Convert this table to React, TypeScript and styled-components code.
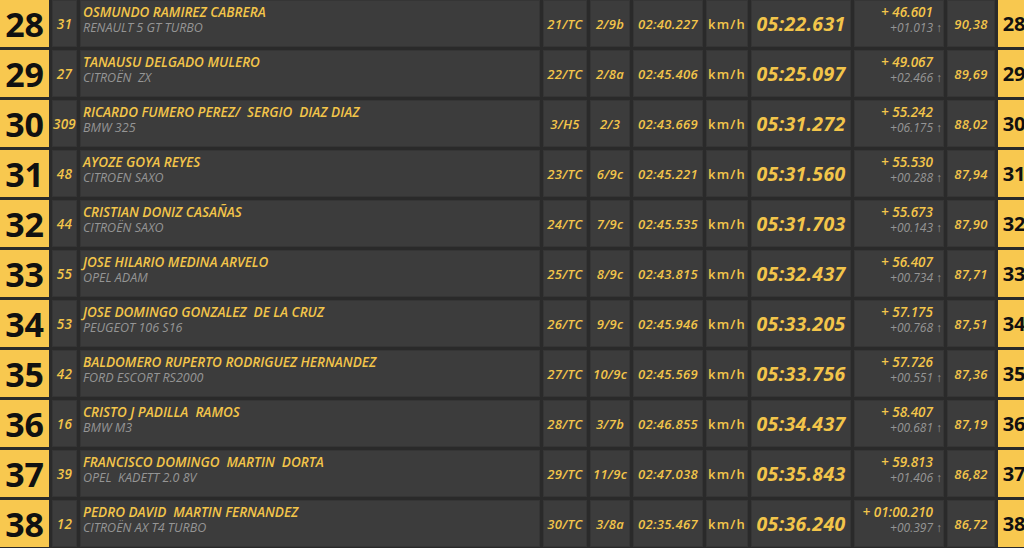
import React from 'react'
import styled, { createGlobalStyle } from 'styled-components'

const GlobalStyle = createGlobalStyle`
    html, body {
        margin: 0;
        padding: 0;
        background: #2a2a2a;
        overflow: hidden;
    }
    body {
        font-family: 'Open Sans', 'Liberation Sans', sans-serif;
    }
`

interface Entry {
    pos: number
    num: string
    driver: string
    car: string
    classPos: string
    catPos: string
    stage: string
    total: string
    gap: string
    prev: string
    speed: string
}

const entries: Entry[] = [
    { pos: 28, num: '31', driver: 'OSMUNDO RAMIREZ CABRERA', car: 'RENAULT 5 GT TURBO', classPos: '21/TC', catPos: '2/9b', stage: '02:40.227', total: '05:22.631', gap: '+ 46.601', prev: '+01.013', speed: '90,38' },
    { pos: 29, num: '27', driver: 'TANAUSU DELGADO MULERO', car: 'CITROËN  ZX', classPos: '22/TC', catPos: '2/8a', stage: '02:45.406', total: '05:25.097', gap: '+ 49.067', prev: '+02.466', speed: '89,69' },
    { pos: 30, num: '309', driver: 'RICARDO FUMERO PEREZ/  SERGIO  DIAZ DIAZ', car: 'BMW 325', classPos: '3/H5', catPos: '2/3', stage: '02:43.669', total: '05:31.272', gap: '+ 55.242', prev: '+06.175', speed: '88,02' },
    { pos: 31, num: '48', driver: 'AYOZE GOYA REYES', car: 'CITROEN SAXO', classPos: '23/TC', catPos: '6/9c', stage: '02:45.221', total: '05:31.560', gap: '+ 55.530', prev: '+00.288', speed: '87,94' },
    { pos: 32, num: '44', driver: 'CRISTIAN DONIZ CASAÑAS', car: 'CITROËN SAXO', classPos: '24/TC', catPos: '7/9c', stage: '02:45.535', total: '05:31.703', gap: '+ 55.673', prev: '+00.143', speed: '87,90' },
    { pos: 33, num: '55', driver: 'JOSE HILARIO MEDINA ARVELO', car: 'OPEL ADAM', classPos: '25/TC', catPos: '8/9c', stage: '02:43.815', total: '05:32.437', gap: '+ 56.407', prev: '+00.734', speed: '87,71' },
    { pos: 34, num: '53', driver: 'JOSE DOMINGO GONZALEZ  DE LA CRUZ', car: 'PEUGEOT 106 S16', classPos: '26/TC', catPos: '9/9c', stage: '02:45.946', total: '05:33.205', gap: '+ 57.175', prev: '+00.768', speed: '87,51' },
    { pos: 35, num: '42', driver: 'BALDOMERO RUPERTO RODRIGUEZ HERNANDEZ', car: 'FORD ESCORT RS2000', classPos: '27/TC', catPos: '10/9c', stage: '02:45.569', total: '05:33.756', gap: '+ 57.726', prev: '+00.551', speed: '87,36' },
    { pos: 36, num: '16', driver: 'CRISTO J PADILLA  RAMOS', car: 'BMW M3', classPos: '28/TC', catPos: '3/7b', stage: '02:46.855', total: '05:34.437', gap: '+ 58.407', prev: '+00.681', speed: '87,19' },
    { pos: 37, num: '39', driver: 'FRANCISCO DOMINGO  MARTIN  DORTA', car: 'OPEL  KADETT 2.0 8V', classPos: '29/TC', catPos: '11/9c', stage: '02:47.038', total: '05:35.843', gap: '+ 59.813', prev: '+01.406', speed: '86,82' },
    { pos: 38, num: '12', driver: 'PEDRO DAVID  MARTIN FERNANDEZ', car: 'CITROËN AX T4 TURBO', classPos: '30/TC', catPos: '3/8a', stage: '02:35.467', total: '05:36.240', gap: '+ 01:00.210', prev: '+00.397', speed: '86,72' },
]

const Board = styled.div`
    display: flex;
    flex-direction: column;
    gap: 3px;
    width: 1030px;
`

const Row = styled.div`
    display: grid;
    grid-template-columns: 49px 25px 460px 44px 40px 70px 42px 100px 90px 48px 32px;
    column-gap: 3px;
    height: 47px;
`

const Cell = styled.div`
    background: #3c3c3c;
    box-shadow: inset 0 0 0 1px #353535;
    color: #f3c54a;
    display: flex;
    align-items: center;
    justify-content: center;
    font-style: italic;
    font-size: 13px;
    font-weight: 600;
    letter-spacing: 0.3px;
    white-space: pre;
    overflow: hidden;
`

const RankCell = styled.div<{ $size: number }>`
    background: #f8c84f;
    color: #111;
    display: flex;
    align-items: center;
    justify-content: center;
    font-weight: 700;
    font-size: ${p => p.$size}px;
    letter-spacing: -0.3px;
`

const NumCell = styled(Cell)`
    font-size: 13.5px;
`

const DriverCell = styled(Cell)`
    flex-direction: column;
    align-items: flex-start;
    justify-content: flex-start;
    padding: 4px 0 0 3px;
    letter-spacing: 0;
`

const Driver = styled.div`
    font-size: 13.5px;
    font-weight: 600;
    line-height: 16px;
    color: #f3c54a;
`

const Car = styled.div`
    font-size: 12.5px;
    font-weight: 500;
    line-height: 16px;
    color: #959595;
`

const Unit = styled(Cell)`
    font-style: normal;
    letter-spacing: 1.2px;
`

const Total = styled(Cell)`
    font-size: 19.5px;
    font-weight: 700;
    letter-spacing: 0.3px;
`

const GapCell = styled(Cell)`
    flex-direction: column;
    align-items: flex-end;
    justify-content: flex-start;
    padding: 4px 2px 0 0;
    letter-spacing: 0;
`

const GapMain = styled.div`
    font-size: 13.5px;
    line-height: 16px;
    padding-right: 9px;
`

const GapPrev = styled.div`
    font-size: 12px;
    font-weight: 500;
    line-height: 16px;
    color: #959595;
`

const Arrow = styled.span`
    font-style: normal;
    margin-left: 3px;
`

export default function App() {
    return (
        <>
            <GlobalStyle />
            <Board>
                {entries.map(e => (
                    <Row key={e.pos}>
                        <RankCell $size={34}>{e.pos}</RankCell>
                        <NumCell>{e.num}</NumCell>
                        <DriverCell>
                            <Driver>{e.driver}</Driver>
                            <Car>{e.car}</Car>
                        </DriverCell>
                        <Cell>{e.classPos}</Cell>
                        <Cell>{e.catPos}</Cell>
                        <Cell>{e.stage}</Cell>
                        <Unit>km/h</Unit>
                        <Total>{e.total}</Total>
                        <GapCell>
                            <GapMain>{e.gap}</GapMain>
                            <GapPrev>
                                {e.prev}
                                <Arrow>↑</Arrow>
                            </GapPrev>
                        </GapCell>
                        <Cell>{e.speed}</Cell>
                        <RankCell $size={20}>{e.pos}</RankCell>
                    </Row>
                ))}
            </Board>
        </>
    )
}
